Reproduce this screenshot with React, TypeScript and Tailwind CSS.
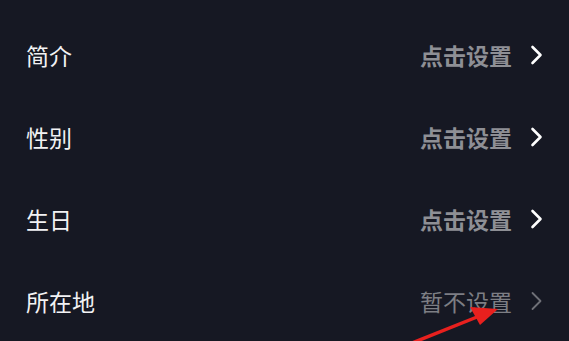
const rows = [
  { label: "简介", value: "点击设置", active: true },
  { label: "性别", value: "点击设置", active: true },
  { label: "生日", value: "点击设置", active: true },
  { label: "所在地", value: "暂不设置", active: false },
];

function Chevron({ active }: { active: boolean }) {
  return (
    <svg
      width="14"
      height="20"
      viewBox="0 0 14 20"
      fill="none"
      className={active ? "text-white" : "text-[#6f7077]"}
    >
      <path
        d="M3.5 2l8 8-8 8"
        stroke="currentColor"
        strokeWidth={active ? 2.6 : 1.8}
        strokeLinecap="round"
        strokeLinejoin="round"
      />
    </svg>
  );
}

export default function App() {
  return (
    <div
      className="relative h-[341px] w-[569px] overflow-hidden bg-[#161823] pt-[14px]"
      style={{ fontFamily: '"Noto Sans CJK SC", "Noto Sans", sans-serif' }}
    >
      {rows.map((row) => (
        <div key={row.label} className="flex h-[82px] items-center pl-[26px] pr-[26px]">
          <span className="text-[23px] leading-none text-[#f2f2f4]">{row.label}</span>
          <div className="ml-auto flex items-center gap-[17px]">
            <span
              className={
                row.active
                  ? "text-[23px] font-semibold leading-none text-[#8e8f95]"
                  : "text-[23px] leading-none text-[#7d7e84]"
              }
            >
              {row.value}
            </span>
            <Chevron active={row.active} />
          </div>
        </div>
      ))}
      {/* red annotation arrow */}
      <svg className="absolute left-0 top-0" width="569" height="341" viewBox="0 0 569 341">
        <line x1="412" y1="343" x2="482" y2="315" stroke="#e8201e" strokeWidth="3.5" />
        <polygon points="498,309 470,307 480,325" fill="#e8201e" />
      </svg>
    </div>
  );
}
